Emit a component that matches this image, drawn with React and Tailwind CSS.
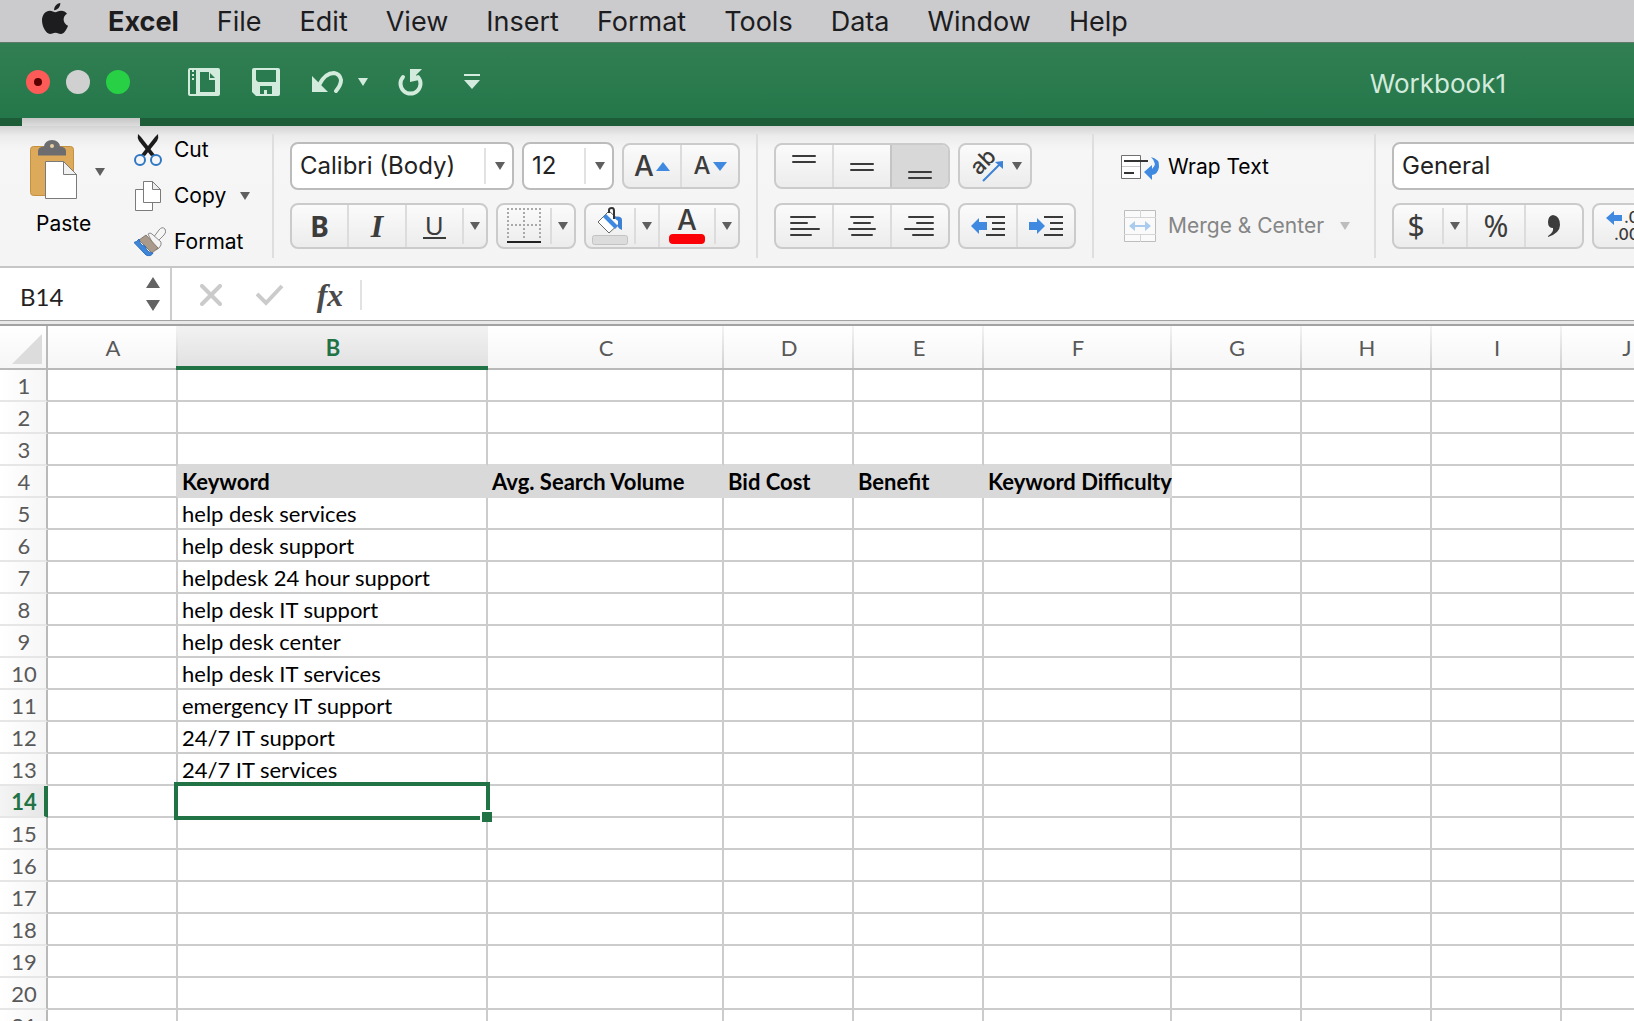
import React, { useState } from 'react'

const menus = ['File', 'Edit', 'View', 'Insert', 'Format', 'Tools', 'Data', 'Window', 'Help']

const columns = [
  { id: 'A', width: 130 },
  { id: 'B', width: 310 },
  { id: 'C', width: 236 },
  { id: 'D', width: 130 },
  { id: 'E', width: 130 },
  { id: 'F', width: 188 },
  { id: 'G', width: 130 },
  { id: 'H', width: 130 },
  { id: 'I', width: 130 },
  { id: 'J', width: 130 }
]

const rowHeaderWidth = 48
const sheetWidth = columns.reduce((sum, c) => sum + c.width, rowHeaderWidth)

const rows = Array.from({ length: 21 }, (_, i) => i + 1)

const cells = {
  B4: 'Keyword',
  C4: 'Avg. Search Volume',
  D4: 'Bid Cost',
  E4: 'Benefit',
  F4: 'Keyword Difficulty',
  B5: 'help desk services',
  B6: 'help desk support',
  B7: 'helpdesk 24 hour support',
  B8: 'help desk IT support',
  B9: 'help desk center',
  B10: 'help desk IT services',
  B11: 'emergency IT support',
  B12: '24/7 IT support',
  B13: '24/7 IT services'
}

const isShaded = (col, row) => row === 4 && 'BCDEF'.includes(col)

function Arrow({ className = 'text-[#5f5f5f]' }) {
  return (
    <svg width="10" height="8" viewBox="0 0 10 8" className={`shrink-0 ${className}`} fill="currentColor">
      <path d="M0 0h10L5 8z" />
    </svg>
  )
}

function Separator({ className = '' }) {
  return <div className={`w-0.5 h-[124px] mt-2 shrink-0 bg-[#dedede] ${className}`} />
}

function Combo({ label, value, options, className, bare }) {
  return (
    <div className={`relative h-12 shrink-0 ${className}`}>
      <select
        aria-label={label}
        defaultValue={value}
        className="w-full h-full appearance-none bg-white border-2 border-[#bcbcbc] rounded-lg pl-2 text-2xl text-[#222]"
      >
        {options.map(o => <option key={o}>{o}</option>)}
      </select>
      {!bare && (
        <div className="absolute right-0 inset-y-1.5 w-[30px] flex items-center justify-center border-l-2 border-[#e2e2e2] pointer-events-none">
          <Arrow />
        </div>
      )}
    </div>
  )
}

function ButtonGroup({ className = '', children }) {
  return (
    <div className={`flex h-[46px] shrink-0 overflow-hidden border-2 border-[#cbcbcb] rounded-lg bg-gradient-to-b from-[#fbfbfb] to-[#ececec] ${className}`}>
      {children}
    </div>
  )
}

function ToolButton({ label, className = 'flex-1', children }) {
  return (
    <button aria-label={label} className={`flex items-center justify-center text-[#3c3c3c] ${className}`}>
      {children}
    </button>
  )
}

function DropButton({ label }) {
  return (
    <button aria-label={label} className="w-6 flex items-center shrink-0">
      <span className="w-full h-9 border-l-2 border-[#dcdcdc] flex items-center justify-center">
        <Arrow />
      </span>
    </button>
  )
}

function Lines({ width = 32, height = 24, lines }) {
  return (
    <svg width={width} height={height} viewBox={`0 0 ${width} ${height}`} stroke="#3a3a3a" strokeWidth="2" strokeLinecap="round" overflow="visible">
      {lines.map(([x1, x2, y]) => <path key={y} d={`M${x1} ${y}H${x2}`} />)}
    </svg>
  )
}

function AppleLogo() {
  return (
    <svg width="26" height="32" viewBox="0 0 26 32" fill="#1d1d1f">
      <path d="M18.3 0c.3 3.600-2.900 7.300-6.200 7.200C11.700 3.900 14.900.4 18.300 0z" />
      <path d="M13.300 9.300c1.300 0 3-1.600 5.900-1.600 2.400 0 4.600 1.200 5.800 3.100-5 2.900-4.200 9.800 1 11.900-1.300 3.700-4.100 8.300-7.100 8.300-2.100 0-2.900-1.300-5.400-1.300S9.800 31 8 31C4.200 31 0 23.700 0 17.600c0-6.200 3.900-9.800 7.700-9.800 2.500 0 4.300 1.500 5.600 1.500z" />
    </svg>
  )
}

function PasteIcon() {
  return (
    <svg width="48" height="60" viewBox="0 0 48 60">
      <rect x=".5" y="6.500" width="43" height="49" rx="3" fill="#dda95a" stroke="#c4913f" />
      <path d="M8 15V11q0-4 6-4.500Q15 0 22 0t8 6.500Q36 7 36 11v4.500H8z" fill="#6d6d70" />
      <circle cx="22" cy="6" r="2" fill="#e8cfa5" />
      <path d="M15.500 21.500h18l13 13v24h-31z" fill="#fff" stroke="#7a7a7a" />
      <path d="M33.500 21.500v13h13z" fill="#f1f1f1" stroke="#7a7a7a" />
    </svg>
  )
}

function CutIcon() {
  return (
    <svg width="28" height="32" viewBox="0 0 28 32" fill="none">
      <path d="M4 0l3 3 14 18-4 1L5 7Q3 4 4 0z" fill="#1c1c1c" />
      <path d="M24 0l-3 3L7 21l4 1L23 7q2-3 1-7z" fill="#1c1c1c" />
      <circle cx="6" cy="26" r="5" stroke="#2f78c4" strokeWidth="2" />
      <circle cx="22" cy="26" r="5" stroke="#2f78c4" strokeWidth="2" />
    </svg>
  )
}

function CopyIcon() {
  return (
    <svg width="28" height="32" viewBox="0 0 28 32" fill="#fff" stroke="#7b7b7b">
      <path d="M1.500 9.500h17v21h-17z" />
      <path d="M9.500 1.500h9l8 8v13h-17z" />
      <path d="M18.500 1.500v8h8z" fill="#eee" />
    </svg>
  )
}

function BrushIcon() {
  return (
    <svg width="32" height="30" viewBox="0 0 32 30">
      <path d="M19 11l6-8q3-4 6-1 2 3-1 6l-7 7z" fill="#f6f6f6" stroke="#8a8a8a" />
      <path d="M14 7q2-2 4 0l9 8q1 3-2 6l-3 2z" fill="#f4f4f4" stroke="#8a8a8a" />
      <path d="M12 8l12 13-6 5L5 13z" fill="#a99a8b" stroke="#857a6e" />
      <path d="M5 12q-2 3-5 3.500L12 28q5 2 7-2-6 0-8-7-5 0-6-7z" fill="#3f86d8" stroke="#2c6fbe" />
    </svg>
  )
}

function BordersIcon() {
  return (
    <svg width="34" height="36" viewBox="0 0 34 36" fill="none">
      <path d="M0 1h34M0 17h34M1 0v32M17 0v32M33 0v32" stroke="#a9a9a9" strokeWidth="2" strokeDasharray="2 2" />
      <path d="M0 34h34" stroke="#222" strokeWidth="2" />
    </svg>
  )
}

function FillIcon() {
  return (
    <svg width="36" height="38" viewBox="0 0 36 38" fill="none" className="shrink-0">
      <path d="M6 15L17 4l12 11-12 11z" fill="#fff" stroke="#666" />
      <path d="M11 10l3-3 12 12-3 3z" fill="#3f8ae0" />
      <path d="M21 10q9-2 9 3v10q-3-1-4-3V14z" fill="#3b80d4" />
      <path d="M17 6V3q0-2 3-2 2 0 2 3v8" stroke="#333" strokeWidth="2" />
      <rect x=".5" y="28.500" width="35" height="9" rx="2" fill="#dcdcdc" stroke="#c3c3c3" />
    </svg>
  )
}

function FontColorIcon() {
  return (
    <span className="flex flex-col items-center">
      <span className="text-[28px] leading-6 font-medium">A</span>
      <span className="w-9 h-2.5 mt-0.5 rounded-sm bg-[#fb0007]" />
    </span>
  )
}

function OrientationIcon() {
  return (
    <svg width="36" height="34" viewBox="0 0 36 34" fill="none" overflow="visible">
      <text x="11" y="27" transform="rotate(-45 11 27)" fontSize="22" fontWeight="500" fontFamily="Inter, sans-serif" fill="#3a3a3a">ab</text>
      <path d="M15 32L32 15" stroke="#3c82d6" strokeWidth="2" />
      <path d="M35 12v8l-8-7z" fill="#3c82d6" />
    </svg>
  )
}

function IndentIcon({ right }) {
  return (
    <svg width="34" height="22" viewBox="0 0 34 22">
      <path d={right ? 'M16 11L8 3v4H0v8h8v4z' : 'M0 11l8-8v4h8v8H8v4z'} fill="#3f8ae0" />
      <path d="M15 2h19M21 8h13M21 14h13M15 20h19" stroke="#3a3a3a" strokeWidth="2" />
    </svg>
  )
}

function WrapIcon() {
  return (
    <svg width="40" height="26" viewBox="0 0 40 26" fill="none">
      <path d="M1.500 1.500h19v23h-19z" stroke="#707070" fill="#fff" />
      <path d="M2 12.500h18" stroke="#c9c9c9" />
      <path d="M4 7h24M4 19h10" stroke="#333" strokeWidth="2" />
      <path d="M31 3q9 2 8 10-1 7-7 8v5l-8-8 8-7v4q6-5-1-12z" fill="#3f8ae0" />
    </svg>
  )
}

function MergeIcon() {
  return (
    <svg width="32" height="32" viewBox="0 0 32 32" fill="none">
      <path d="M.5.5h31v31H.5z" stroke="#bdbdbd" fill="#fafafa" />
      <path d="M0 7.500h32M0 24.500h32M16.500 0v7M16.500 25v7" stroke="#d5d5d5" />
      <path d="M9 16h14" stroke="#a9cbee" strokeWidth="2" />
      <path d="M5 16l6-5v10zM27 16l-6-5v10z" fill="#a9cbee" />
    </svg>
  )
}

function DecimalIcon() {
  return (
    <svg width="44" height="34" viewBox="0 0 44 34" className="shrink-0" fill="#3a3a3a" fontFamily="Inter, sans-serif" fontSize="16" fontWeight="500">
      <path d="M0 9l8-7v4h8v6H8v4z" fill="#3f8ae0" />
      <text x="18" y="14">.0</text>
      <text x="8" y="31">.00</text>
    </svg>
  )
}

function MenuBar() {
  return (
    <nav className="flex items-center h-[43px] shrink-0 pl-[42px] pt-0.5 bg-[#cbcbcd] border-b border-[#5f7a6a] text-[27px] leading-8 text-[#1d1d1f] whitespace-nowrap">
      <button aria-label="Apple menu" className="mr-10 pb-1.5"><AppleLogo /></button>
      <button className="font-bold mr-[38px]">Excel</button>
      <div className="flex gap-[38px]">
        {menus.map(m => <button key={m}>{m}</button>)}
      </div>
    </nav>
  )
}

function TitleBar() {
  return (
    <header className="shrink-0 text-[#d3ebdd]">
      <div className="flex items-center h-[75px] pt-0.5 pl-[26px] pr-32 bg-gradient-to-b from-[#317f53] to-[#24774a]">
        <div className="flex gap-4">
          <button aria-label="Close" className="size-6 rounded-full bg-[#fc5b57] flex items-center justify-center">
            <span className="size-2 rounded-full bg-[#5a0000]" />
          </button>
          <button aria-label="Minimize" className="size-6 rounded-full bg-[#d0d0d0]" />
          <button aria-label="Zoom" className="size-6 rounded-full bg-[#27d045]" />
        </div>
        <button aria-label="Workbook gallery" className="ml-[58px]">
          <svg width="32" height="28" viewBox="0 0 32 28" fill="none">
            <rect x="1" y="1" width="30" height="26" rx="1" stroke="currentColor" strokeWidth="2" />
            <path d="M8 1h23v26H8z" fill="currentColor" />
            <path d="M4 3h2M4 7h2M4 11h2" stroke="currentColor" strokeWidth="2" />
            <path d="M12 4h9v8h6v12H12z" fill="#2a7b4f" />
            <path d="M22 5l5 5h-5z" fill="#2a7b4f" />
          </svg>
        </button>
        <button aria-label="Save" className="ml-8">
          <svg width="28" height="28" viewBox="0 0 28 28">
            <path d="M2 0h24q2 0 2 2v24q0 2-2 2H4l-4-4V2q0-2 2-2z" fill="currentColor" />
            <path d="M4 2h20v12H6l-2-2zM8 18h12v8h-5v-4h-3v4H8z" fill="#2a7b4f" />
          </svg>
        </button>
        <button aria-label="Undo" className="ml-8">
          <svg width="32" height="22" viewBox="0 0 32 22" fill="none">
            <path d="M0 5v16h16z" fill="currentColor" />
            <path d="M7 14C12 4 18 2 22 2q6 1 7 7 0 5-5 11" stroke="currentColor" strokeWidth="4" strokeLinecap="round" />
          </svg>
        </button>
        <button aria-label="Undo history" className="ml-3.5"><Arrow className="text-[#d3ebdd]" /></button>
        <button aria-label="Redo" className="ml-[30px]">
          <svg width="26" height="28" viewBox="0 0 26 28" fill="none">
            <path d="M5 9A10 10 0 1 0 20 9" stroke="currentColor" strokeWidth="4" strokeLinecap="round" />
            <path d="M12 1h12l-6 6 3 5-9 2z" fill="currentColor" />
          </svg>
        </button>
        <button aria-label="Customize toolbar" className="ml-10">
          <svg width="16" height="15" viewBox="0 0 16 15" fill="currentColor">
            <path d="M0 0h16v2H0zM0 6h16l-8 9z" />
          </svg>
        </button>
        <h1 className="ml-auto pt-1 text-[26px] leading-8">Workbook1</h1>
      </div>
      <div className="h-2 pl-[22px] bg-[#1c5c36]">
        <div className="w-[118px] h-full bg-gradient-to-b from-[#c6c6c6] to-[#dddddd]" />
      </div>
    </header>
  )
}

function Ribbon() {
  return (
    <section className="flex h-[142px] shrink-0 overflow-hidden border-b-2 border-[#c6c6c6] bg-[linear-gradient(to_bottom,#d3d3d3_0,#ececec_10px,#f6f6f6_24px,#f4f4f4_100%)] text-[21px] leading-7 text-black whitespace-nowrap">
      <div className="flex w-[272px] shrink-0 pl-[30px]">
        <div className="flex w-[104px] shrink-0">
          <button className="flex flex-col items-start self-start pt-3.5">
            <PasteIcon />
            <span className="mt-2.5 pl-1.5">Paste</span>
          </button>
          <button aria-label="Paste options" className="self-start mt-[42px] ml-1"><Arrow /></button>
        </div>
        <div className="flex flex-col">
          <button className="flex items-center gap-3 h-[46px] pt-0.5"><CutIcon />Cut</button>
          <div className="flex items-center h-[46px] pt-0.5">
            <button className="flex items-center gap-3"><CopyIcon />Copy</button>
            <button aria-label="Copy options" className="ml-3.5"><Arrow /></button>
          </div>
          <button className="flex items-center gap-2 h-[46px] pt-0.5"><BrushIcon />Format</button>
        </div>
      </div>
      <Separator />

      <div className="flex flex-col shrink-0 gap-[13px] pt-4 ml-4">
        <div className="flex items-center gap-2">
          <Combo label="Font" value="Calibri (Body)" options={['Calibri (Body)', 'Arial', 'Times New Roman']} className="w-56" />
          <Combo label="Font size" value="12" options={['10', '11', '12', '14']} className="w-[92px]" />
          <ButtonGroup className="w-[118px]">
            <ToolButton label="Increase font size">
              <span className="text-[28px] leading-8 font-medium">A</span>
              <svg width="14" height="9" viewBox="0 0 14 9" className="ml-0.5"><path d="M7 0l7 9H0z" fill="#3f8ae0" /></svg>
            </ToolButton>
            <ToolButton label="Decrease font size" className="flex-1 border-l-2 border-[#dcdcdc]">
              <span className="text-2xl leading-8 font-medium">A</span>
              <svg width="14" height="9" viewBox="0 0 14 9" className="ml-0.5"><path d="M7 9l7-9H0z" fill="#3f8ae0" /></svg>
            </ToolButton>
          </ButtonGroup>
        </div>
        <div className="flex gap-2">
          <ButtonGroup className="w-[198px]">
            <ToolButton label="Bold">
              <span className="font-['Noto_Sans',sans-serif] font-bold text-[28px] leading-8">B</span>
            </ToolButton>
            <ToolButton label="Italic" className="flex-1 border-l-2 border-[#dcdcdc]">
              <span className="font-['Liberation_Serif',serif] font-bold italic text-[32px] leading-8">I</span>
            </ToolButton>
            <ToolButton label="Underline" className="flex-1 border-l-2 border-[#dcdcdc]">
              <span className="font-['Noto_Sans',sans-serif] text-[26px] leading-6 px-0.5 border-b-2 border-[#3a3a3a]">U</span>
            </ToolButton>
            <DropButton label="Underline options" />
          </ButtonGroup>
          <ButtonGroup className="w-20">
            <ToolButton label="Borders"><BordersIcon /></ToolButton>
            <DropButton label="Border options" />
          </ButtonGroup>
          <ButtonGroup className="w-[156px]">
            <ToolButton label="Fill color" className="w-12"><FillIcon /></ToolButton>
            <DropButton label="Fill color options" />
            <ToolButton label="Font color" className="flex-1 border-l-2 border-[#dcdcdc]"><FontColorIcon /></ToolButton>
            <DropButton label="Font color options" />
          </ButtonGroup>
        </div>
      </div>
      <Separator className="ml-4" />

      <div className="flex flex-col shrink-0 gap-[13px] pt-4 ml-4 w-[302px]">
        <div className="flex items-center h-12 gap-2">
          <ButtonGroup className="w-44">
            <ToolButton label="Align top"><Lines lines={[[5, 27, 2], [5, 27, 8]]} /></ToolButton>
            <ToolButton label="Align middle" className="flex-1 border-l-2 border-[#dcdcdc]">
              <Lines lines={[[5, 27, 10], [5, 27, 16]]} />
            </ToolButton>
            <ToolButton label="Align bottom" className="flex-1 border-l-2 border-[#c4c4c4] bg-[#d8d8d8]">
              <Lines lines={[[5, 27, 18], [5, 27, 24]]} />
            </ToolButton>
          </ButtonGroup>
          <ButtonGroup className="w-[74px]">
            <ToolButton label="Orientation" className="flex-1 gap-2"><OrientationIcon /><Arrow /></ToolButton>
          </ButtonGroup>
        </div>
        <div className="flex gap-2">
          <ButtonGroup className="w-44">
            <ToolButton label="Align left"><Lines lines={[[3, 27, 3], [3, 19, 9], [3, 31, 15], [3, 23, 21]]} /></ToolButton>
            <ToolButton label="Center" className="flex-1 border-l-2 border-[#dcdcdc]">
              <Lines lines={[[5, 27, 3], [8, 24, 9], [3, 29, 15], [6, 26, 21]]} />
            </ToolButton>
            <ToolButton label="Align right" className="flex-1 border-l-2 border-[#dcdcdc]">
              <Lines lines={[[5, 29, 3], [13, 29, 9], [1, 29, 15], [9, 29, 21]]} />
            </ToolButton>
          </ButtonGroup>
          <ButtonGroup className="w-[118px]">
            <ToolButton label="Decrease indent"><IndentIcon /></ToolButton>
            <ToolButton label="Increase indent" className="flex-1 border-l-2 border-[#dcdcdc]"><IndentIcon right /></ToolButton>
          </ButtonGroup>
        </div>
      </div>
      <Separator className="ml-4" />

      <div className="flex flex-col shrink-0 gap-[13px] pt-4 ml-[26px] w-[230px]">
        <button className="flex items-center gap-2 h-12 pt-0.5"><WrapIcon />Wrap Text</button>
        <div className="flex items-center justify-between h-[46px] text-[#858585]">
          <button className="flex items-center gap-3 pl-1"><MergeIcon />Merge &amp; Center</button>
          <button aria-label="Merge options"><Arrow className="text-[#bdbdbd]" /></button>
        </div>
      </div>
      <Separator className="ml-6" />

      <div className="flex flex-col shrink-0 gap-[13px] pt-4 ml-4">
        <Combo label="Number format" value="General" options={['General', 'Number', 'Currency']} className="w-[318px]" bare />
        <div className="flex gap-2">
          <ButtonGroup className="w-48">
            <ToolButton label="Currency" className="w-12 pr-1"><span className="font-['Noto_Sans',sans-serif] text-[30px] leading-8">$</span></ToolButton>
            <DropButton label="Currency options" />
            <ToolButton label="Percent" className="flex-1 border-l-2 border-[#dcdcdc]">
              <span className="font-['Noto_Sans',sans-serif] text-[30px] leading-8">%</span>
            </ToolButton>
            <ToolButton label="Comma style" className="flex-1 border-l-2 border-[#dcdcdc]">
              <svg width="14" height="24" viewBox="0 0 14 24" fill="currentColor">
                <path d="M1 22q6-4 5-8-5 0-5-6 0-6 5-7 7 1 7 10 0 8-12 12z" />
              </svg>
            </ToolButton>
          </ButtonGroup>
          <ButtonGroup className="w-[116px]">
            <ToolButton label="Increase decimal" className="w-14 pl-3"><DecimalIcon /></ToolButton>
          </ButtonGroup>
        </div>
      </div>
    </section>
  )
}

function FormulaBar() {
  const [formula, setFormula] = useState('')

  return (
    <section className="flex h-[52px] shrink-0 bg-white">
      <div className="flex w-[172px] shrink-0 border-r-2 border-[#cdcdcd]">
        <input
          aria-label="Name box"
          defaultValue="B14"
          className="w-[146px] pl-5 pt-1.5 font-['Lato',sans-serif] text-2xl text-[#222] outline-none"
        />
        <svg width="14" height="34" viewBox="0 0 14 34" className="self-center" fill="#636363">
          <path d="M7 0l7 11H0zM0 23h14L7 34z" />
        </svg>
      </div>
      <div className="flex items-center flex-1 pl-7 pt-0.5">
        <button aria-label="Cancel">
          <svg width="22" height="22" viewBox="0 0 22 22" stroke="#cbcbcb" strokeWidth="4" strokeLinecap="round">
            <path d="M2 2l18 18M20 2L2 20" />
          </svg>
        </button>
        <button aria-label="Enter" className="ml-[34px]">
          <svg width="28" height="22" viewBox="0 0 28 22" fill="none" stroke="#cbcbcb" strokeWidth="4">
            <path d="M1 10l9 9L26 2" />
          </svg>
        </button>
        <button aria-label="Insert function" className="w-9 ml-7 font-['Liberation_Serif',serif] font-bold italic text-[32px] leading-8 text-[#4a4a4a]">fx</button>
        <div className="w-0.5 h-[30px] ml-3 bg-[#e2e2e2]" />
        <input
          aria-label="Formula"
          value={formula}
          onChange={e => setFormula(e.target.value)}
          className="flex-1 h-full px-3 font-['Lato',sans-serif] text-2xl outline-none"
        />
      </div>
    </section>
  )
}

function ColumnHeader({ id }) {
  const selected = id === 'B'
  return (
    <th
      scope="col"
      className={`relative h-11 p-0 pt-0.5 border-b-2 border-[#b9b9b9] ${
        selected
          ? 'bg-gradient-to-b from-[#f2f2f2] to-[#e1e1e1] text-[#217346] font-bold'
          : 'bg-gradient-to-b from-white to-[#f6f6f6] text-[#595959] font-normal'
      }`}
    >
      {id}
      {selected ? (
        <span className="absolute -left-0.5 right-0 -bottom-0.5 h-1 bg-[#217346]" />
      ) : (
        <span className="absolute right-0 inset-y-0 w-0.5 bg-gradient-to-b from-[#f4f4f4] to-[#d0d0d0]" />
      )}
    </th>
  )
}

function Cell({ col, row }) {
  const shaded = isShaded(col, row)
  const bottom = shaded || isShaded(col, row + 1) ? 'border-b-[#d9d9d9]' : 'border-b-[#cccccc]'
  const right = shaded || (row === 4 && col === 'A') ? 'border-r-[#d9d9d9]' : 'border-r-[#cccccc]'
  return (
    <td className={`relative h-8 p-0 pl-1 pt-0.5 border-b-2 border-r-2 ${bottom} ${right} ${shaded ? 'bg-[#d9d9d9] font-bold' : ''}`}>
      {cells[`${col}${row}`]}
      {col === 'B' && row === 14 && (
        <>
          <span className="absolute -inset-1 z-10 border-4 border-[#217346]" />
          <span className="absolute -right-1.5 -bottom-1.5 z-10 size-3 border-t-2 border-l-2 border-white bg-[#217346]" />
        </>
      )}
    </td>
  )
}

function Sheet() {
  return (
    <main className="flex-1 min-h-0 overflow-hidden bg-white">
      <table
        className="table-fixed border-separate border-spacing-0 font-['Lato',sans-serif] text-[22px] leading-7 text-black whitespace-nowrap"
        style={{ width: sheetWidth }}
      >
        <colgroup>
          <col style={{ width: rowHeaderWidth }} />
          {columns.map(c => <col key={c.id} style={{ width: c.width }} />)}
        </colgroup>
        <thead>
          <tr>
            <th className="p-0 border-r-2 border-b-2 border-[#b9b9b9] bg-gradient-to-b from-white to-[#f6f6f6]">
              <svg width="30" height="30" viewBox="0 0 30 30" className="ml-3 mt-1" fill="#dcdcdc">
                <path d="M30 0v30H0z" />
              </svg>
            </th>
            {columns.map(c => <ColumnHeader key={c.id} id={c.id} />)}
          </tr>
        </thead>
        <tbody>
          {rows.map(row => (
            <tr key={row}>
              <th
                scope="row"
                className={`h-8 p-0 pt-0.5 border-b-2 border-b-[#e6e6e6] ${
                  row === 14
                    ? 'border-r-4 border-r-[#217346] bg-gradient-to-r from-[#f4f4f4] to-[#e6e6e6] text-[#217346] font-bold pl-1'
                    : 'border-r-2 border-r-[#b9b9b9] bg-gradient-to-r from-white to-[#f6f6f6] text-[#595959] font-normal pl-0.5'
                }`}
              >
                {row}
              </th>
              {columns.map(c => <Cell key={c.id} col={c.id} row={row} />)}
            </tr>
          ))}
        </tbody>
      </table>
    </main>
  )
}

export default function App() {
  return (
    <div className="flex flex-col h-screen overflow-hidden bg-white font-['Inter',sans-serif]">
      <MenuBar />
      <TitleBar />
      <Ribbon />
      <FormulaBar />
      <div className="h-1.5 shrink-0 border-t border-b-2 border-[#a3a3a3] bg-[#e9e9e9]" />
      <Sheet />
    </div>
  )
}
